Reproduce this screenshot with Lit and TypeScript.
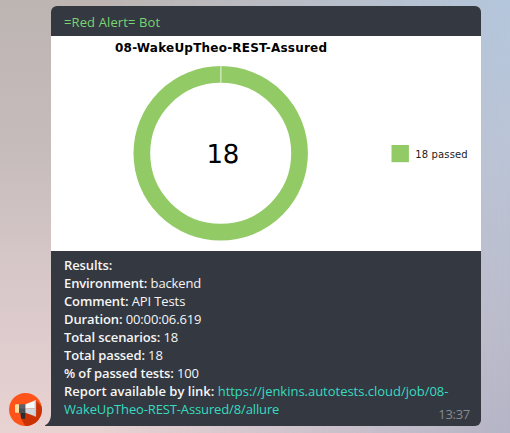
import { LitElement, html, svg, css } from "lit";
import { customElement } from "lit/decorators.js";

const results: [string, string][] = [
  ["Results:", ""],
  ["Environment:", "backend"],
  ["Comment:", "API Tests"],
  ["Duration:", "00:00:06.619"],
  ["Total scenarios:", "18"],
  ["Total passed:", "18"],
  ["% of passed tests:", "100"],
];

@customElement("bot-avatar")
export class BotAvatar extends LitElement {
  static styles = css`
    :host, .icon { display: block; width: 33px; height: 33px; }
  `;
  render() {
    return html`<svg class="icon" viewBox="0 0 33 33">
      <defs><clipPath id="disc"><circle cx="16.5" cy="16.5" r="16.5"/></clipPath></defs>
      <circle cx="16.5" cy="16.5" r="16.5" fill="#ff5419"/>
      <path clip-path="url(#disc)" d="M27 7.5L40 21V40H20L12 25.5L17 18Z" fill="#cb3203"/>
      <path d="M11 18H16.2V25.7H13.2Q12 25.7 12 24.5Z" fill="#292d31"/>
      <path d="M7 11.3H10.5V19.8H7Q6 19.8 6 18.8V12.3Q6 11.3 7 11.3Z" fill="#ffdf9b"/>
      <path d="M10 11.3H16.5V19.8H10Z" fill="#5d6268"/>
      <path d="M10 15.5H16.5V19.8H10Z" fill="#494e54"/>
      <path d="M16.5 11.3L26 7.5V15.5H16.5Z" fill="#f7f8fa"/>
      <path d="M16.5 15.5H26V23.3L16.5 19.8Z" fill="#d3d8df"/>
      <rect x="25.6" y="7" width="1.5" height="16.7" rx=".7" fill="#c0cad5"/>
    </svg>`;
  }
}

@customElement("result-chart")
export class ResultChart extends LitElement {
  static styles = css`
    :host, .chart { display: block; width: 430px; height: 215px; }
    .chart { background: #fff; font-family: "DejaVu Sans", sans-serif; }
    .title { font-size: 12px; font-weight: 700; }
    .total { font-size: 26px; text-rendering: geometricPrecision; }
    .legend { font-size: 10px; fill: #222; }
  `;
  render() {
    return html`<svg class="chart" viewBox="0 0 430 215">
      ${svg`
        <text class="title" x="64" y="16" textLength="212">08-WakeUpTheo-REST-Assured</text>
        <circle cx="169.7" cy="117.3" r="78.85" fill="none" stroke="#92ca66" stroke-width="16.7"/>
        <path d="M169.9 30V47.5" stroke="#eaf5e1" stroke-width="1"/>
        <text class="total" x="155.4" y="127.4" textLength="33">18</text>
        <rect x="340.5" y="109" width="17.4" height="17.2" fill="#92ca66"/>
        <text class="legend" x="364.3" y="122.3" textLength="52.3">18 passed</text>
      `}
    </svg>`;
  }
}

@customElement("app-root")
export class AppRoot extends LitElement {
  static styles = css`
    :host {
      display: flex;
      align-items: flex-end;
      box-sizing: border-box;
      width: 510px;
      height: 433px;
      padding: 6px 29px 7px 9px;
      overflow: hidden;
      font: 13px/18px "Open Sans", "Noto Sans", sans-serif;
      background:
        linear-gradient(to bottom, #bdb5b2 0%, #c5bbbb 32%, #d8c8ca 65%, #e9d2d2 100%);
      position: relative;
    }
    .tint {
      position: absolute;
      inset: 0;
      background: linear-gradient(to bottom, #b4c6dc 0%, #bac4d6 35%, #babbcb 75%, #b4b4c6 100%);
      mask-image: linear-gradient(to right, transparent 20%, #000 100%);
    }
    bot-avatar { position: relative; flex: none; margin-right: 3px; }
    .tail { position: relative; flex: none; display: block; width: 6px; height: 12px; }
    .bubble {
      position: relative;
      width: 430px;
      height: 420px;
      border-radius: 6px 6px 6px 0;
      overflow: hidden;
      background: #343840;
      color: #f5f5f6;
    }
    .name {
      height: 30px;
      box-sizing: border-box;
      padding: 7px 13px 0;
      font-weight: 500;
      letter-spacing: 0.12px;
      color: #78d572;
    }
    .body { padding: 5px 13px 0; }
    .row { letter-spacing: -0.12px; }
    .label { font-weight: 600; }
    .link { color: #36dcc0; text-decoration: none; letter-spacing: -0.02px; }
    .path { letter-spacing: -0.13px; }
    .time { position: absolute; right: 11px; bottom: 3px; letter-spacing: -0.3px; color: #858b91; }
  `;
  render() {
    return html`
      <div class="tint"></div>
      <bot-avatar></bot-avatar>
      <svg class="tail" viewBox="0 0 6 12"><path d="M6 0V12H0V11.2C4 9.6 6 5 6 0Z" fill="#343840"/></svg>
      <div class="bubble">
        <div class="name">=Red Alert= Bot</div>
        <result-chart></result-chart>
        <div class="body">
          ${results.map(([k, v]) => html`<div class="row"><span class="label">${k}</span> ${v}</div>`)}
          <div>
            <span class="label">Report available by link:</span>
            <a class="link">https://jenkins.autotests.cloud/job/08-<br><span class="path">WakeUpTheo-REST-Assured/8/allure</span></a>
          </div>
        </div>
        <div class="time">13:37</div>
      </div>
    `;
  }
}
